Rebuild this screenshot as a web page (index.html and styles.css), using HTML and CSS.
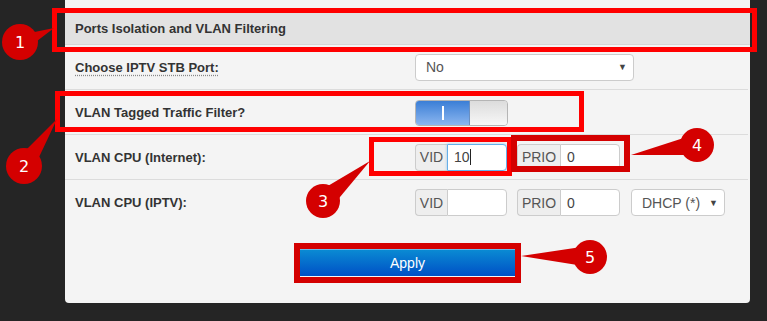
FILE: index.html
```html
<!DOCTYPE html>
<html lang="en">

<head>
    <meta charset="UTF-8">
    <meta name="viewport" content="width=device-width, initial-scale=1.0">
    <title>Ports Isolation and VLAN Filtering</title>
    <link rel="stylesheet" href="styles.css">
</head>

<body>
    <div class="panel">
        <div class="panel-head">Ports Isolation and VLAN Filtering</div>

        <div class="row">
            <label class="row-label dotted">Choose IPTV STB Port:</label>
            <div class="controls">
                <div class="select wide"><span>No</span><span class="caret">&#9660;</span></div>
            </div>
        </div>

        <div class="row">
            <label class="row-label">VLAN Tagged Traffic Filter?</label>
            <div class="controls">
                <div class="toggle">
                    <div class="toggle-on"><span class="bar"></span></div>
                    <div class="toggle-off"></div>
                </div>
            </div>
        </div>

        <div class="row">
            <label class="row-label">VLAN CPU (Internet):</label>
            <div class="controls">
                <div class="group">
                    <span class="addon vid">VID</span>
                    <span class="field focus">10<span class="cursor"></span></span>
                </div>
                <div class="group">
                    <span class="addon prio">PRIO</span>
                    <span class="field">0</span>
                </div>
            </div>
        </div>

        <div class="row last">
            <label class="row-label">VLAN CPU (IPTV):</label>
            <div class="controls">
                <div class="group">
                    <span class="addon vid">VID</span>
                    <span class="field"></span>
                </div>
                <div class="group">
                    <span class="addon prio">PRIO</span>
                    <span class="field">0</span>
                </div>
                <div class="select small"><span>DHCP (*)</span><span class="caret">&#9660;</span></div>
            </div>
        </div>

        <div class="actions">
            <button type="button" class="apply">Apply</button>
        </div>
    </div>

    <!-- callouts drawn over the screenshot -->
    <svg class="marks" width="767" height="321" viewBox="0 0 767 321">
        <g fill="none">
            <rect x="54.5" y="10.5" width="700" height="39" stroke="#ff0000" stroke-width="5" />
            <rect x="57.5" y="93.5" width="524" height="36" stroke="#ff0000" stroke-width="5" />
            <rect x="371.5" y="139.5" width="138" height="34" stroke="#ff0000" stroke-width="5" />
            <rect x="514" y="138" width="113" height="31" stroke="#d40000" stroke-width="6" />
            <rect x="297" y="246" width="221" height="34" stroke="#d40000" stroke-width="6" />
        </g>
        <g fill="#d40000">
            <polygon points="54,28 24,51 15,36" />
            <circle cx="20" cy="42" r="18" />
            <polygon points="57,119 32,172 16,160" />
            <circle cx="24" cy="166" r="18" />
            <polygon points="370,161 330,209 316,193" />
            <circle cx="323" cy="201" r="17" />
            <polygon points="631,155 699,155 696,134" />
            <circle cx="697" cy="145" r="17" />
            <polygon points="521,256 590,267 588,246" />
            <circle cx="590" cy="257" r="17" />
        </g>
        <g class="num" fill="#ffffff" text-anchor="middle">
            <text x="20" y="48">1</text>
            <text x="24" y="172">2</text>
            <text x="323" y="207">3</text>
            <text x="697" y="151">4</text>
            <text x="590" y="263">5</text>
        </g>
    </svg>
</body>

</html>
```
FILE: styles.css
```css
* {
    padding: 0;
    margin: 0;
    box-sizing: border-box;
}

body {
    background: #252525;
    width: 767px;
    height: 321px;
    overflow: hidden;
    position: relative;
    font-family: 'Liberation Sans', Arial, sans-serif;
}

.panel {
    margin-left: 65px;
    width: 685px;
    height: 303px;
    background: #f4f4f4;
    border-radius: 0 0 4px 4px;
    padding-top: 12px;
}

.panel-head {
    height: 33px;
    background: #e2e2e2;
    border-bottom: 1px solid #d6d6d6;
    padding-left: 10px;
    display: flex;
    align-items: center;
    font-size: 13px;
    font-weight: bold;
    color: #333;
}

.row {
    display: flex;
    align-items: center;
    height: 45px;
    border-bottom: 1px solid #dcdcdc;
    margin-right: 2px;
}

.row.last {
    border-bottom: none;
}

.row-label {
    width: 350px;
    padding-left: 10px;
    font-size: 13px;
    font-weight: bold;
    color: #333;
}

.dotted {
    text-decoration: underline dotted #888;
    text-underline-offset: 3px;
}

.controls {
    display: flex;
    align-items: center;
    gap: 10px;
}

.select {
    height: 27px;
    background: #fff;
    border: 1px solid #ccc;
    border-radius: 4px;
    display: flex;
    align-items: center;
    justify-content: space-between;
    padding: 0 6px 0 10px;
    font-size: 14px;
    color: #555;
}

.select.wide {
    width: 219px;
}

.select.small {
    width: 94px;
    margin-left: 1px;
}

.caret {
    font-size: 9px;
    color: #444;
}

.toggle {
    display: flex;
    width: 93px;
    height: 26px;
    border: 1px solid #b5b5b5;
    border-radius: 4px;
    overflow: hidden;
    margin-top: 1px;
}

.toggle-on {
    width: 54px;
    background: linear-gradient(#3b7ed6, #8bb6ef);
    display: flex;
    align-items: center;
    justify-content: center;
    border-right: 1px solid #6b8fc0;
}

.bar {
    width: 2px;
    height: 14px;
    background: #fff;
}

.toggle-off {
    flex: 1;
    background: linear-gradient(#dcdcdc, #f7f7f7);
}

.group {
    display: flex;
    height: 27px;
    font-size: 14px;
    color: #555;
}

.addon {
    background: #eee;
    border: 1px solid #ccc;
    border-right: none;
    border-radius: 4px 0 0 4px;
    display: flex;
    align-items: center;
    justify-content: center;
}

.addon.vid {
    width: 32px;
}

.addon.prio {
    width: 43px;
}

.field {
    width: 60px;
    background: #fff;
    border: 1px solid #ccc;
    border-radius: 0 4px 4px 0;
    display: flex;
    align-items: center;
    padding-left: 6px;
    color: #444;
}

.field.focus {
    border-color: #66afe9;
    box-shadow: 0 0 3px rgba(102, 175, 233, 0.6);
}

.cursor {
    width: 1px;
    height: 16px;
    background: #222;
}

.actions {
    display: flex;
    padding: 23px 0 0 235px;
}

.apply {
    width: 215px;
    height: 28px;
    border: none;
    border-top: 2px solid #6ab8ea;
    background: linear-gradient(#0a8ad3, #0050c6);
    color: #fff;
    font-family: 'Liberation Sans', Arial, sans-serif;
    font-size: 14px;
}

.marks {
    position: absolute;
    left: 0;
    top: 0;
}

.num {
    font-family: 'DejaVu Sans', sans-serif;
    font-size: 16px;
}
```
